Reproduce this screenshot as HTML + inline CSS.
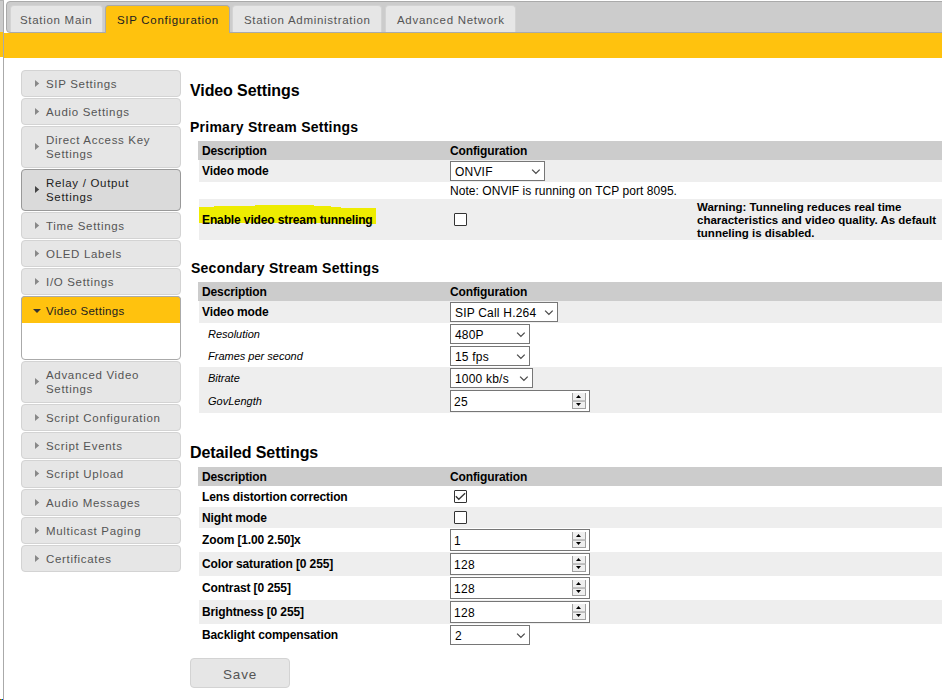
<!DOCTYPE html>
<html><head><meta charset="utf-8">
<style>
*{box-sizing:border-box;}
html,body{margin:0;padding:0;background:#fff;width:942px;height:700px;overflow:hidden;position:relative;font-family:"Liberation Sans",sans-serif;}
.a{position:absolute;}
.vt{font-size:11.5px;letter-spacing:0.33px;white-space:nowrap;line-height:14px;}
/* tabs */
#tabbar{left:6px;top:1px;width:960px;height:32px;background:#ccc;border:1px solid #aaa;border-radius:4px 0 0 4px;}
.tab{top:5px;height:27px;background:#e6e6e6;border:1px solid #d3d3d3;border-bottom:0;border-radius:4px 4px 0 0;color:#555;}
.tab span{position:absolute;top:7px;letter-spacing:0.7px;}
.tab.act{background:#ffc20e;border-color:#aaa;height:28px;color:#212121;}
#band{left:4px;top:33px;width:938px;height:25px;background:#ffc20e;}
/* sidebar */
.acc{left:21px;width:160px;background:#e6e6e6;border:1px solid #d3d3d3;border-radius:4px;color:#555;}
.acc .tri{position:absolute;left:13px;width:0;height:0;border-left:4px solid #888;border-top:3.5px solid transparent;border-bottom:3.5px solid transparent;}
.acc span{position:absolute;left:24px;letter-spacing:0.68px;}
.acc.hov{background:#dadada;border-color:#999;color:#212121;}
.acc.hov .tri{border-left-color:#454545;}
/* content */
.h1{font-weight:bold;font-size:16px;letter-spacing:-0.1px;line-height:18px;color:#000;white-space:nowrap;}
.h2{font-weight:bold;font-size:14px;letter-spacing:0.25px;line-height:16px;color:#000;white-space:nowrap;}
.row{left:199px;width:743px;}
.hdr{left:198px;width:744px;height:19px;background:#cccccc;}
.g{background:#eeeeee;}
.t{position:absolute;font-weight:bold;font-size:12px;letter-spacing:-0.12px;line-height:14px;color:#000;white-space:nowrap;}
.ti{position:absolute;font-style:italic;font-size:11px;line-height:13px;color:#000;white-space:nowrap;}
.sel{position:absolute;left:251px;height:20px;background:#fff;border:1px solid #767676;font-size:12px;line-height:14px;color:#000;}
.sel span{position:absolute;left:4px;top:3px;white-space:nowrap;letter-spacing:0.2px;}
.sel svg{position:absolute;right:3px;top:7px;}
.num{position:absolute;left:251px;width:140px;height:22px;background:#fff;border:1px solid #767676;font-size:12px;line-height:14px;color:#000;}
.num span{position:absolute;left:3px;top:4px;letter-spacing:0.3px;}
.spin{position:absolute;left:121px;top:2px;}
.spin:before{content:"";position:absolute;left:0;top:6px;width:12px;height:2px;background:#b4b4b4;}
.spin i{position:absolute;left:3px;width:0;height:0;border-left:3px solid transparent;border-right:3px solid transparent;}
.spin i.u{top:2px;border-bottom:3px solid #000;}
.spin i.d{top:9px;border-top:3px solid #000;}
.cb{position:absolute;left:255px;width:13px;height:13px;border:1px solid #333;border-radius:1px;background:#fff;}
</style></head>
<body>
<!-- left strip -->
<div class="a" style="left:0;top:0;width:3px;height:32px;background:#ccc;"></div>
<div class="a" style="left:0;top:32px;width:3px;height:25px;background:#ffc20e;"></div>
<div class="a" style="left:3px;top:0;width:1px;height:700px;background:#aaa;"></div><div class="a" style="left:0;top:0;width:4px;height:1px;background:#b4b4b4;"></div>

<div id="tabbar" class="a"></div>
<div id="band" class="a"></div>
<div class="a tab" style="left:10px;width:93px;"><span class="vt" style="left:9px;">Station Main</span></div>
<div class="a tab act" style="left:105px;width:125px;"><span class="vt" style="left:11px;">SIP Configuration</span></div>
<div class="a tab" style="left:232px;width:150px;"><span class="vt" style="left:11px;">Station Administration</span></div>
<div class="a tab" style="left:385px;width:131px;"><span class="vt" style="left:11px;">Advanced Network</span></div>

<!-- sidebar -->
<div class="a acc" style="top:70px;height:27px;"><svg class="a" style="left:13px;top:9px" width="5" height="7"><path d="M0 0L4.2 3.5L0 7Z" fill="#888"/></svg><span class="vt" style="top:6px">SIP Settings</span></div>
<div class="a acc" style="top:98px;height:27px;"><svg class="a" style="left:13px;top:9px" width="5" height="7"><path d="M0 0L4.2 3.5L0 7Z" fill="#888"/></svg><span class="vt" style="top:6px">Audio Settings</span></div>
<div class="a acc" style="top:126px;height:42px;"><svg class="a" style="left:13px;top:16px" width="5" height="7"><path d="M0 0L4.2 3.5L0 7Z" fill="#888"/></svg><span class="vt" style="top:6px">Direct Access Key<br>Settings</span></div>
<div class="a acc hov" style="top:169px;height:42px;"><svg class="a" style="left:13px;top:16px" width="5" height="7"><path d="M0 0L4.2 3.5L0 7Z" fill="#454545"/></svg><span class="vt" style="top:6px">Relay / Output<br>Settings</span></div>
<div class="a acc" style="top:212px;height:27px;"><svg class="a" style="left:13px;top:9px" width="5" height="7"><path d="M0 0L4.2 3.5L0 7Z" fill="#888"/></svg><span class="vt" style="top:6px">Time Settings</span></div>
<div class="a acc" style="top:240px;height:27px;"><svg class="a" style="left:13px;top:9px" width="5" height="7"><path d="M0 0L4.2 3.5L0 7Z" fill="#888"/></svg><span class="vt" style="top:6px">OLED Labels</span></div>
<div class="a acc" style="top:268px;height:27px;"><svg class="a" style="left:13px;top:9px" width="5" height="7"><path d="M0 0L4.2 3.5L0 7Z" fill="#888"/></svg><span class="vt" style="top:6px">I/O Settings</span></div>
<div class="a" style="left:21px;top:296px;width:160px;height:64px;border:1px solid #aaa;border-radius:4px;background:#fff;"></div>
<div class="a" style="left:21px;top:296px;width:160px;height:27px;border:1px solid #aaa;border-bottom:0;border-radius:4px 4px 0 0;background:#ffc20e;color:#212121;"><i class="a" style="left:11px;top:12px;width:0;height:0;border-top:4px solid #333;border-left:4px solid transparent;border-right:4px solid transparent;"></i><span class="vt a" style="left:24px;top:7px">Video Settings</span></div>
<div class="a acc" style="top:361px;height:42px;"><svg class="a" style="left:13px;top:16px" width="5" height="7"><path d="M0 0L4.2 3.5L0 7Z" fill="#888"/></svg><span class="vt" style="top:6px">Advanced Video<br>Settings</span></div>
<div class="a acc" style="top:404px;height:27px;"><svg class="a" style="left:13px;top:9px" width="5" height="7"><path d="M0 0L4.2 3.5L0 7Z" fill="#888"/></svg><span class="vt" style="top:6px">Script Configuration</span></div>
<div class="a acc" style="top:432px;height:27px;"><svg class="a" style="left:13px;top:9px" width="5" height="7"><path d="M0 0L4.2 3.5L0 7Z" fill="#888"/></svg><span class="vt" style="top:6px">Script Events</span></div>
<div class="a acc" style="top:460px;height:28px;"><svg class="a" style="left:13px;top:9px" width="5" height="7"><path d="M0 0L4.2 3.5L0 7Z" fill="#888"/></svg><span class="vt" style="top:6px">Script Upload</span></div>
<div class="a acc" style="top:489px;height:27px;"><svg class="a" style="left:13px;top:9px" width="5" height="7"><path d="M0 0L4.2 3.5L0 7Z" fill="#888"/></svg><span class="vt" style="top:6px">Audio Messages</span></div>
<div class="a acc" style="top:517px;height:27px;"><svg class="a" style="left:13px;top:9px" width="5" height="7"><path d="M0 0L4.2 3.5L0 7Z" fill="#888"/></svg><span class="vt" style="top:6px">Multicast Paging</span></div>
<div class="a acc" style="top:545px;height:27px;"><svg class="a" style="left:13px;top:9px" width="5" height="7"><path d="M0 0L4.2 3.5L0 7Z" fill="#888"/></svg><span class="vt" style="top:6px">Certificates</span></div>

<!-- content -->
<div class="a h1" style="left:190px;top:82px;">Video Settings</div>
<div class="a h2" style="left:190px;top:119px;">Primary Stream Settings</div>

<div class="a hdr" style="top:141px;"><span class="t" style="left:4px;top:3px">Description</span><span class="t" style="left:252px;top:3px">Configuration</span></div>
<div class="a row g" style="top:160px;height:22px;"><span class="t" style="left:3px;top:4px">Video mode</span>
  <div class="sel" style="top:1px;width:95px;"><span>ONVIF</span><svg width="10" height="6" viewBox="0 0 10 6"><path d="M1.1 0.6L4.9 4.4L8.7 0.6" fill="none" stroke="#4a4a4a" stroke-width="1.3"/></svg></div></div>
<div class="a row" style="top:182px;height:17px;"><span class="t" style="left:251px;top:2px;font-weight:normal;letter-spacing:0.05px">Note: ONVIF is running on TCP port 8095.</span></div>
<div class="a row g" style="top:199px;height:41px;">
  <svg class="a" style="left:0;top:0" width="200" height="41" shape-rendering="crispEdges"><path d="M0 8H15V7H56V6H115V7H132V8H142V9H177V25H137V24H0Z" fill="#eeec00"/></svg>
  <span class="t" style="left:3px;top:14px">Enable video stream tunneling</span>
  <div class="cb" style="top:14px;"></div>
  <span class="t" style="left:498px;top:2px;font-size:11.5px;letter-spacing:0;line-height:13px;">Warning: Tunneling reduces real time<br>characteristics and video quality. As default<br>tunneling is disabled.</span>
</div>

<div class="a h2" style="left:191px;top:260px;">Secondary Stream Settings</div>
<div class="a hdr" style="top:282px;"><span class="t" style="left:4px;top:3px">Description</span><span class="t" style="left:252px;top:3px">Configuration</span></div>
<div class="a row g" style="top:301px;height:22px;"><span class="t" style="left:3px;top:4px">Video mode</span>
  <div class="sel" style="top:1px;width:108px;"><span>SIP Call H.264</span><svg width="10" height="6" viewBox="0 0 10 6"><path d="M1.1 0.6L4.9 4.4L8.7 0.6" fill="none" stroke="#4a4a4a" stroke-width="1.3"/></svg></div></div>
<div class="a row" style="top:323px;height:22px;"><span class="ti" style="left:9px;top:5px">Resolution</span>
  <div class="sel" style="top:1px;width:80px;"><span>480P</span><svg width="10" height="6" viewBox="0 0 10 6"><path d="M1.1 0.6L4.9 4.4L8.7 0.6" fill="none" stroke="#4a4a4a" stroke-width="1.3"/></svg></div></div>
<div class="a row" style="top:345px;height:22px;"><span class="ti" style="left:9px;top:5px">Frames per second</span>
  <div class="sel" style="top:1px;width:80px;"><span>15 fps</span><svg width="10" height="6" viewBox="0 0 10 6"><path d="M1.1 0.6L4.9 4.4L8.7 0.6" fill="none" stroke="#4a4a4a" stroke-width="1.3"/></svg></div></div>
<div class="a row g" style="top:367px;height:22px;"><span class="ti" style="left:9px;top:5px">Bitrate</span>
  <div class="sel" style="top:1px;width:83px;"><span>1000 kb/s</span><svg width="10" height="6" viewBox="0 0 10 6"><path d="M1.1 0.6L4.9 4.4L8.7 0.6" fill="none" stroke="#4a4a4a" stroke-width="1.3"/></svg></div></div>
<div class="a row g" style="top:389px;height:24px;"><span class="ti" style="left:9px;top:6px">GovLength</span>
  <div class="num" style="top:1px;"><span>25</span><svg class="spin" width="14" height="16" viewBox="0 0 14 16"><rect x="0" y="0" width="14" height="16" fill="#efefef"/><rect x="0" y="0" width="1" height="16" fill="#a0a0a0"/><rect x="13" y="0" width="1" height="16" fill="#a0a0a0"/><rect x="0" y="15" width="14" height="1" fill="#a0a0a0"/><rect x="0" y="7.3" width="14" height="1.5" fill="#b0b0b0"/><path d="M4 5L6.5 2L9 5Z" fill="#000"/><path d="M4 10L9 10L6.5 13Z" fill="#000"/></svg></div></div>

<div class="a h1" style="left:190px;top:444px;">Detailed Settings</div>
<div class="a hdr" style="top:467px;"><span class="t" style="left:4px;top:3px">Description</span><span class="t" style="left:252px;top:3px">Configuration</span></div>
<div class="a row" style="top:486px;height:21px;"><span class="t" style="left:3px;top:4px">Lens distortion correction</span>
  <div class="cb" style="top:4px;"><svg width="11" height="11" viewBox="0 0 11 11" style="position:absolute;left:0;top:0"><path d="M0.8 5.2L3.8 8.3L10.1 2.2" fill="none" stroke="#333" stroke-width="1.3"/></svg></div></div>
<div class="a row g" style="top:507px;height:21px;"><span class="t" style="left:3px;top:4px">Night mode</span><div class="cb" style="top:4px;"></div></div>
<div class="a row" style="top:528px;height:24px;"><span class="t" style="left:3px;top:5px">Zoom [1.00 2.50]x</span>
  <div class="num" style="top:1px;"><span>1</span><svg class="spin" width="14" height="16" viewBox="0 0 14 16"><rect x="0" y="0" width="14" height="16" fill="#efefef"/><rect x="0" y="0" width="1" height="16" fill="#a0a0a0"/><rect x="13" y="0" width="1" height="16" fill="#a0a0a0"/><rect x="0" y="15" width="14" height="1" fill="#a0a0a0"/><rect x="0" y="7.3" width="14" height="1.5" fill="#b0b0b0"/><path d="M4 5L6.5 2L9 5Z" fill="#000"/><path d="M4 10L9 10L6.5 13Z" fill="#000"/></svg></div></div>
<div class="a row g" style="top:552px;height:24px;"><span class="t" style="left:3px;top:5px">Color saturation [0 255]</span>
  <div class="num" style="top:1px;"><span>128</span><svg class="spin" width="14" height="16" viewBox="0 0 14 16"><rect x="0" y="0" width="14" height="16" fill="#efefef"/><rect x="0" y="0" width="1" height="16" fill="#a0a0a0"/><rect x="13" y="0" width="1" height="16" fill="#a0a0a0"/><rect x="0" y="15" width="14" height="1" fill="#a0a0a0"/><rect x="0" y="7.3" width="14" height="1.5" fill="#b0b0b0"/><path d="M4 5L6.5 2L9 5Z" fill="#000"/><path d="M4 10L9 10L6.5 13Z" fill="#000"/></svg></div></div>
<div class="a row" style="top:576px;height:24px;"><span class="t" style="left:3px;top:5px">Contrast [0 255]</span>
  <div class="num" style="top:1px;"><span>128</span><svg class="spin" width="14" height="16" viewBox="0 0 14 16"><rect x="0" y="0" width="14" height="16" fill="#efefef"/><rect x="0" y="0" width="1" height="16" fill="#a0a0a0"/><rect x="13" y="0" width="1" height="16" fill="#a0a0a0"/><rect x="0" y="15" width="14" height="1" fill="#a0a0a0"/><rect x="0" y="7.3" width="14" height="1.5" fill="#b0b0b0"/><path d="M4 5L6.5 2L9 5Z" fill="#000"/><path d="M4 10L9 10L6.5 13Z" fill="#000"/></svg></div></div>
<div class="a row g" style="top:600px;height:24px;"><span class="t" style="left:3px;top:5px">Brightness [0 255]</span>
  <div class="num" style="top:1px;"><span>128</span><svg class="spin" width="14" height="16" viewBox="0 0 14 16"><rect x="0" y="0" width="14" height="16" fill="#efefef"/><rect x="0" y="0" width="1" height="16" fill="#a0a0a0"/><rect x="13" y="0" width="1" height="16" fill="#a0a0a0"/><rect x="0" y="15" width="14" height="1" fill="#a0a0a0"/><rect x="0" y="7.3" width="14" height="1.5" fill="#b0b0b0"/><path d="M4 5L6.5 2L9 5Z" fill="#000"/><path d="M4 10L9 10L6.5 13Z" fill="#000"/></svg></div></div>
<div class="a row" style="top:624px;height:22px;"><span class="t" style="left:3px;top:4px">Backlight compensation</span>
  <div class="sel" style="top:1px;width:80px;"><span>2</span><svg width="10" height="6" viewBox="0 0 10 6"><path d="M1.1 0.6L4.9 4.4L8.7 0.6" fill="none" stroke="#4a4a4a" stroke-width="1.3"/></svg></div></div>

<div class="a" style="left:190px;top:658px;width:100px;height:30px;background:#e6e6e6;border:1px solid #d3d3d3;border-radius:4px;color:#555;"><span class="a" style="left:32px;top:8px;font-size:13.5px;letter-spacing:0.85px;line-height:15px;">Save</span></div>
<div class="a" style="left:0;top:699px;width:1px;height:1px;background:#f00;"></div><div class="a" style="left:1px;top:699px;width:1px;height:1px;background:#0f0;"></div><div class="a" style="left:2px;top:699px;width:1px;height:1px;background:#00f;"></div>
</body></html>
